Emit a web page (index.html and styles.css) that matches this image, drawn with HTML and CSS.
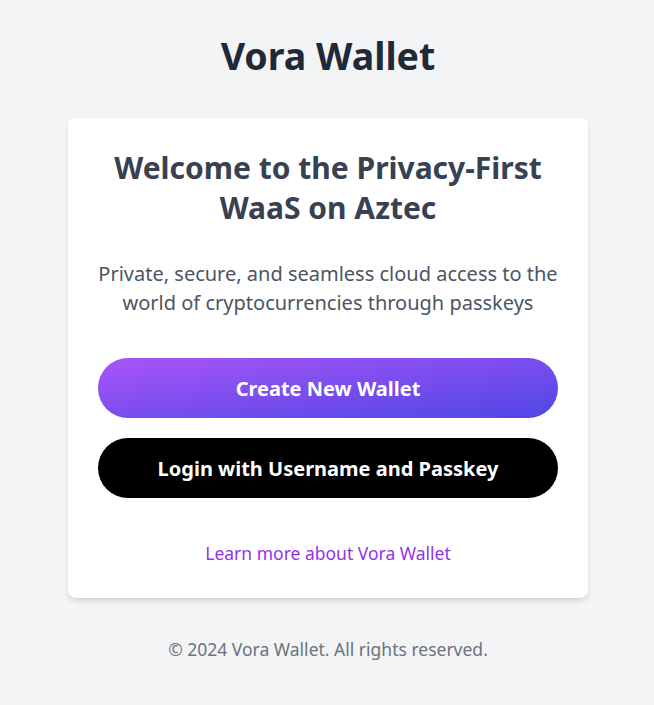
FILE: index.html
```html
<!DOCTYPE html>
<html lang="en">
<head>
<meta charset="utf-8">
<title>Vora Wallet</title>
<link rel="stylesheet" href="styles.css">
</head>
<body>
<main class="page">
  <h1 class="brand">Vora Wallet</h1>
  <section class="card">
    <h2 class="card-title">Welcome to the Privacy-First WaaS on Aztec</h2>
    <p class="card-text">Private, secure, and seamless cloud access to the world of cryptocurrencies through passkeys</p>
    <div class="actions">
      <button class="btn btn-primary">Create New Wallet</button>
      <button class="btn btn-dark">Login with Username and Passkey</button>
    </div>
    <a class="learn" href="#">Learn more about Vora Wallet</a>
  </section>
  <footer class="footer">© 2024 Vora Wallet. All rights reserved.</footer>
</main>
</body>
</html>
```
FILE: styles.css
```css
* { box-sizing: border-box; }
html, body { margin: 0; padding: 0; }
body {
  background: #f3f4f6;
  font-family: "Noto Sans", "Open Sans", sans-serif;
  color: #1f2937;
}
.page {
  display: flex;
  flex-direction: column;
  align-items: center;
  padding: 36px 0 0 2px;
}
.brand {
  margin: 0;
  font-size: 37.6px;
  line-height: 40px;
  font-weight: 700;
  color: #1f2937;
}
.card {
  margin-top: 42px;
  width: 520px;
  background: #fff;
  border-radius: 8px;
  box-shadow: 0 4px 6px -1px rgba(0,0,0,0.1), 0 2px 4px -2px rgba(0,0,0,0.1);
  padding: 30px 30px 33px;
  display: flex;
  flex-direction: column;
  align-items: center;
  text-align: center;
}
.card-title {
  margin: 0;
  font-size: 30px;
  line-height: 40px;
  font-weight: 700;
  color: #374151;
}
.card-text {
  margin: 31px 0 0;
  font-size: 20px;
  line-height: 29px;
  color: #4b5563;
}
.actions {
  margin-top: 41px;
  width: 100%;
  display: flex;
  flex-direction: column;
  gap: 20px;
}
.btn {
  width: 100%;
  height: 60px;
  border: none;
  border-radius: 9999px;
  font-family: inherit;
  font-size: 20px;
  font-weight: 700;
  color: #fff;
  cursor: pointer;
}
.btn-primary {
  background: linear-gradient(to bottom right, #a855f7, #4f46e5);
}
.btn-dark {
  background: #000;
}
.learn {
  margin-top: 43px;
  font-size: 17.5px;
  line-height: 24px;
  color: #9333ea;
  text-decoration: none;
}
.footer {
  margin-top: 39px;
  font-size: 17.5px;
  line-height: 24px;
  color: #6b7280;
}
```
